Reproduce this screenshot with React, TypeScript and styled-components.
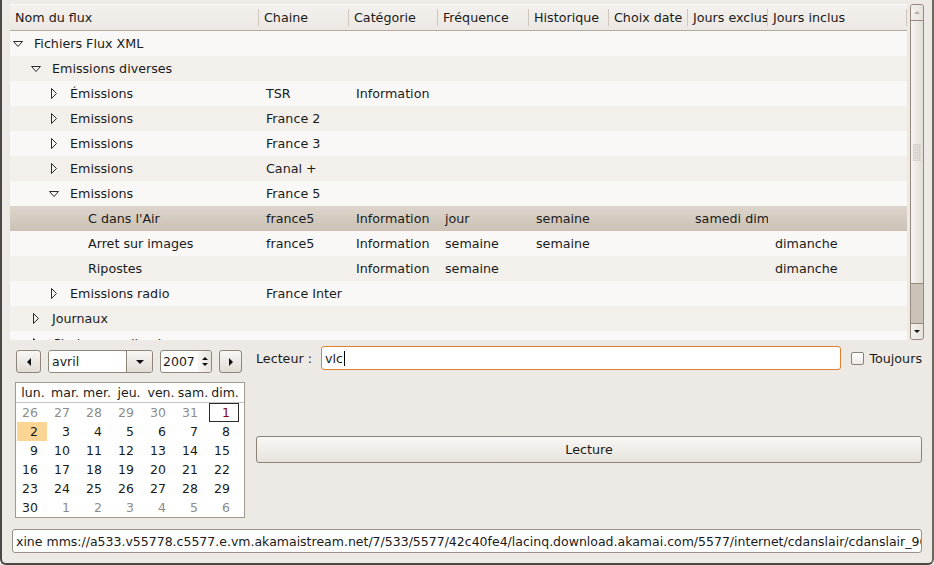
import React from 'react';
import styled, { createGlobalStyle } from 'styled-components';

const GlobalStyle = createGlobalStyle`
  html, body {
    margin: 0;
    padding: 0;
    background: #edeae6;
  }
  body {
    font-family: "DejaVu Sans", "Liberation Sans", sans-serif;
    font-size: 12.7px;
    color: #1a1a1a;
  }
`;

const Window = styled.div`
  width: 934px;
  height: 565px;
  box-sizing: border-box;
  border-left: 2px solid #4a4744;
  border-right: 2px solid #6b6661;
  border-bottom: 2px solid #4a4744;
  border-radius: 0 0 6px 6px;
  background: #edeae6;
  padding: 4px 8px 0 8px;
  display: flex;
  flex-direction: column;
`;

const TreeArea = styled.div`
  height: 336px;
  display: flex;
  gap: 3px;
`;

const TreeView = styled.div`
  flex: 1;
  background: #f9f8f7;
  overflow: hidden;
`;

const COLS = '249px 90px 89px 91px 80px 79px 80px 1fr';

const HeaderRow = styled.div`
  display: grid;
  grid-template-columns: ${COLS};
  background: linear-gradient(#f3f1ee, #ece8e3);
  border-top: 1px solid #fbfaf9;
  border-bottom: 1px solid #b4a99d;
  box-sizing: border-box;
  height: 27px;
`;

const HeaderCell = styled.div`
  position: relative;
  display: flex;
  align-items: center;
  padding-left: 5px;
  white-space: nowrap;
  overflow: hidden;
  &::after {
    content: '';
    position: absolute;
    right: 0;
    top: 4px;
    bottom: 4px;
    width: 1px;
    background: #cfc7be;
  }
`;

const Row = styled.div<{ $alt: boolean; $selected: boolean }>`
  display: grid;
  grid-template-columns: ${COLS};
  height: 25px;
  background: ${p =>
    p.$selected
      ? 'linear-gradient(#ddd5cc, #cbc1b5)'
      : p.$alt
      ? '#f3f0ec'
      : '#f9f8f7'};
`;

const Cell = styled.div`
  display: flex;
  align-items: center;
  padding-left: 7px;
  white-space: nowrap;
  overflow: hidden;
`;

const NameCell = styled.div<{ $level: number }>`
  display: flex;
  align-items: center;
  padding-left: ${p => p.$level * 18}px;
  white-space: nowrap;
  overflow: hidden;
`;

const Expander = styled.span`
  width: 24px;
  flex: none;
  display: flex;
  align-items: center;
`;

const ExpanderBox = styled.span`
  width: 15px;
  display: flex;
  justify-content: center;
  align-items: center;
`;

const Scrollbar = styled.div`
  width: 14px;
  display: flex;
  flex-direction: column;
  border: 1px solid #94897e;
  border-radius: 3px;
  overflow: hidden;
  box-sizing: border-box;
  background: #cbc2b8;
`;

const ScrollButton = styled.div`
  height: 15px;
  flex: none;
  display: flex;
  align-items: center;
  justify-content: center;
  background: linear-gradient(90deg, #f4f2ef, #e6e1db);
`;

const ScrollThumb = styled.div`
  height: 264px;
  flex: none;
  display: flex;
  align-items: center;
  justify-content: center;
  border-top: 1px solid #94897e;
  border-bottom: 1px solid #94897e;
  box-sizing: border-box;
  background: linear-gradient(90deg, #f6f4f2, #e2ddd6);
`;

const Grip = styled.div`
  width: 8px;
  height: 17px;
  background-image: linear-gradient(90deg, #d6d0c9 1px, transparent 1px),
    linear-gradient(#d6d0c9 1px, transparent 1px);
  background-size: 2px 2px;
  opacity: 0.9;
`;

const ScrollTrough = styled.div`
  flex: 1;
  border-bottom: 1px solid #94897e;
`;

const Bottom = styled.div`
  margin-top: 6px;
  height: 172px;
  display: flex;
`;

const CalendarColumn = styled.div`
  width: 230px;
  margin-left: 5px;
  padding-top: 4px;
  display: flex;
  flex-direction: column;
  font-size: 12.5px;
`;

const NavRow = styled.div`
  height: 23px;
  display: flex;
  gap: 7px;
  padding-left: 1px;
`;

const NavButton = styled.div<{ $w: number }>`
  width: ${p => p.$w}px;
  box-sizing: border-box;
  border: 1px solid #8e857b;
  border-radius: 3px;
  background: linear-gradient(#f8f6f4, #e2dcd5);
  display: flex;
  align-items: center;
  justify-content: center;
`;

const Combo = styled.div`
  width: 105px;
  box-sizing: border-box;
  border: 1px solid #8e857b;
  border-radius: 3px;
  display: flex;
  overflow: hidden;
`;

const ComboText = styled.div`
  flex: 1;
  background: #fff;
  display: flex;
  align-items: center;
  padding-left: 3px;
`;

const ComboButton = styled.div`
  width: 25px;
  border-left: 1px solid #8e857b;
  background: linear-gradient(#f8f6f4, #e2dcd5);
  display: flex;
  align-items: center;
  justify-content: center;
`;

const Spin = styled.div`
  width: 52px;
  box-sizing: border-box;
  border: 1px solid #8e857b;
  border-radius: 3px;
  background: #fff;
  display: flex;
  overflow: hidden;
`;

const SpinText = styled.div`
  flex: 1;
  display: flex;
  align-items: center;
  padding-left: 2px;
`;

const SpinArrows = styled.div`
  width: 13px;
  display: flex;
  flex-direction: column;
  align-items: center;
  justify-content: center;
  gap: 3px;
  background: linear-gradient(90deg, #f8f6f4, #e8e3dd);
`;

const Calendar = styled.div`
  margin-top: 9px;
  height: 136px;
  box-sizing: border-box;
  border: 1px solid #a39a8f;
  background: #fff;
  padding-left: 1px;
`;

const CalHeader = styled.div`
  display: grid;
  grid-template-columns: repeat(7, 32px);
  height: 19px;
  border-bottom: 1px solid #c9c2ba;
  margin-left: -1px;
  padding-left: 1px;
`;

const CalHeadCell = styled.div`
  display: flex;
  align-items: center;
  justify-content: center;
`;

const CalGrid = styled.div`
  display: grid;
  grid-template-columns: repeat(7, 32px);
  grid-auto-rows: 19px;
`;

const Day = styled.div<{ $muted: boolean; $current: boolean; $today: boolean }>`
  margin-right: 2px;
  padding-right: 8px;
  display: flex;
  align-items: center;
  justify-content: flex-end;
  box-sizing: border-box;
  color: ${p => (p.$today ? '#8b0000' : p.$muted ? '#8c8c8c' : '#1a1a1a')};
  background: ${p => (p.$current ? '#fcd494' : 'transparent')};
  border: ${p => (p.$today ? '1px solid #2a2a2a' : '1px solid transparent')};
`;

const RightColumn = styled.div`
  flex: 1;
  margin-left: 11px;
  margin-right: 2px;
  display: flex;
  flex-direction: column;
`;

const PlayerRow = styled.div`
  height: 24px;
  display: flex;
  align-items: center;
`;

const Label = styled.span`
  width: 65px;
  flex: none;
`;

const TextInput = styled.div<{ $focused?: boolean }>`
  height: 24px;
  box-sizing: border-box;
  border: 1px solid ${p => (p.$focused ? '#dc812f' : '#9a9189')};
  border-radius: 3px;
  background: #fff;
  display: flex;
  align-items: center;
  padding-left: 3px;
  white-space: nowrap;
  overflow: hidden;
`;

const PlayerInput = styled(TextInput)`
  flex: 1;
`;

const Caret = styled.span`
  display: inline-block;
  width: 1px;
  height: 15px;
  background: #000;
  margin-left: 1px;
`;

const CheckLabel = styled.label`
  display: flex;
  align-items: center;
  gap: 5px;
  margin-left: 10px;
`;

const CheckBox = styled.span`
  width: 13px;
  height: 13px;
  box-sizing: border-box;
  border: 1px solid #8a8178;
  border-radius: 2px;
  background: linear-gradient(#fff, #eeeae6);
`;

const PlayButton = styled.div`
  margin-top: 66px;
  height: 27px;
  box-sizing: border-box;
  border: 1px solid #8b8278;
  border-radius: 3px;
  background: linear-gradient(#f9f8f6, #f1eeea 45%, #e7e2dc);
  display: flex;
  align-items: center;
  justify-content: center;
`;

const CommandInput = styled(TextInput)`
  margin: 11px 2px 0 2px;
  font-size: 12.5px;
`;

type TreeRow = {
  level: number;
  open?: boolean;
  leaf?: boolean;
  selected?: boolean;
  cells: string[];
};

const headers = ['Nom du flux', 'Chaine', 'Catégorie', 'Fréquence', 'Historique', 'Choix date', 'Jours exclus', 'Jours inclus'];

const rows: TreeRow[] = [
  { level: 0, open: true, cells: ['Fichiers Flux XML'] },
  { level: 1, open: true, cells: ['Emissions diverses'] },
  { level: 2, cells: ['Émissions', 'TSR', 'Information'] },
  { level: 2, cells: ['Emissions', 'France 2'] },
  { level: 2, cells: ['Emissions', 'France 3'] },
  { level: 2, cells: ['Emissions', 'Canal +'] },
  { level: 2, open: true, cells: ['Emissions', 'France 5'] },
  { level: 3, leaf: true, selected: true, cells: ["C dans l'Air", 'france5', 'Information', 'jour', 'semaine', '', 'samedi dimanche', ''] },
  { level: 3, leaf: true, cells: ['Arret sur images', 'france5', 'Information', 'semaine', 'semaine', '', '', 'dimanche'] },
  { level: 3, leaf: true, cells: ['Ripostes', '', 'Information', 'semaine', '', '', '', 'dimanche'] },
  { level: 2, cells: ['Emissions radio', 'France Inter'] },
  { level: 1, cells: ['Journaux'] },
  { level: 1, cells: ['Chaines en direct'] },
];

const dayNames = ['lun.', 'mar.', 'mer.', 'jeu.', 'ven.', 'sam.', 'dim.'];

// six weeks shown for avril 2007, starting lundi 26 mars
const days: { n: number; muted: boolean }[] = [];
for (let i = 26; i <= 31; i++) days.push({ n: i, muted: true });
for (let i = 1; i <= 30; i++) days.push({ n: i, muted: false });
for (let i = 1; i <= 6; i++) days.push({ n: i, muted: true });

const OpenArrow = () => (
  <svg width="10" height="6" viewBox="0 0 10 6">
    <path d="M0.5 0.5 H9.5 L5 5.5 Z" fill="none" stroke="#2b2b2b" strokeWidth="1" />
  </svg>
);

const ClosedArrow = () => (
  <svg width="6" height="11" viewBox="0 0 6 11">
    <path d="M0.5 0.5 L5.5 5.5 L0.5 10.5 Z" fill="none" stroke="#2b2b2b" strokeWidth="1" />
  </svg>
);

const Tri = ({ dir, color = '#111', size = 4 }: { dir: 'up' | 'down' | 'left' | 'right'; color?: string; size?: number }) => {
  const s = size;
  const d =
    dir === 'up'
      ? `M0 ${s} L${s} 0 L${2 * s} ${s} Z`
      : dir === 'down'
      ? `M0 0 L${2 * s} 0 L${s} ${s} Z`
      : dir === 'left'
      ? `M${s} 0 L${s} ${2 * s} L0 ${s} Z`
      : `M0 0 L${s} ${s} L0 ${2 * s} Z`;
  const vertical = dir === 'up' || dir === 'down';
  return (
    <svg width={vertical ? 2 * s : s} height={vertical ? s : 2 * s}>
      <path d={d} fill={color} />
    </svg>
  );
};

const App: React.FC = () => {
  return (
    <>
      <GlobalStyle />
      <Window>
        <TreeArea>
          <TreeView>
            <HeaderRow>
              {headers.map(h => (
                <HeaderCell key={h}>{h}</HeaderCell>
              ))}
            </HeaderRow>
            {rows.map((r, i) => (
              <Row key={i} $alt={i % 2 === 1} $selected={!!r.selected}>
                <NameCell $level={r.level}>
                  <Expander>
                    <ExpanderBox>{r.leaf ? null : r.open ? <OpenArrow /> : <ClosedArrow />}</ExpanderBox>
                  </Expander>
                  {r.cells[0]}
                </NameCell>
                {headers.slice(1).map((_, c) => (
                  <Cell key={c}>{r.cells[c + 1] || ''}</Cell>
                ))}
              </Row>
            ))}
          </TreeView>
          <Scrollbar>
            <ScrollButton>
              <Tri dir="up" color="#b8b0a7" size={3} />
            </ScrollButton>
            <ScrollThumb>
              <Grip />
            </ScrollThumb>
            <ScrollTrough />
            <ScrollButton>
              <Tri dir="down" color="#111" size={3} />
            </ScrollButton>
          </Scrollbar>
        </TreeArea>

        <Bottom>
          <CalendarColumn>
            <NavRow>
              <NavButton $w={25}>
                <Tri dir="left" size={4} />
              </NavButton>
              <Combo>
                <ComboText>avril</ComboText>
                <ComboButton>
                  <Tri dir="down" size={4} />
                </ComboButton>
              </Combo>
              <Spin>
                <SpinText>2007</SpinText>
                <SpinArrows>
                  <Tri dir="up" size={3} />
                  <Tri dir="down" size={3} />
                </SpinArrows>
              </Spin>
              <NavButton $w={23}>
                <Tri dir="right" size={4} />
              </NavButton>
            </NavRow>
            <Calendar>
              <CalHeader>
                {dayNames.map(d => (
                  <CalHeadCell key={d}>{d}</CalHeadCell>
                ))}
              </CalHeader>
              <CalGrid>
                {days.map((d, i) => (
                  <Day key={i} $muted={d.muted} $current={i === 7} $today={i === 6}>
                    {d.n}
                  </Day>
                ))}
              </CalGrid>
            </Calendar>
          </CalendarColumn>

          <RightColumn>
            <PlayerRow>
              <Label>Lecteur :</Label>
              <PlayerInput $focused>
                vlc
                <Caret />
              </PlayerInput>
              <CheckLabel>
                <CheckBox />
                Toujours
              </CheckLabel>
            </PlayerRow>
            <PlayButton>Lecture</PlayButton>
          </RightColumn>
        </Bottom>

        <CommandInput>
          xine mms://a533.v55778.c5577.e.vm.akamaistream.net/7/533/5577/42c40fe4/lacinq.download.akamai.com/5577/internet/cdanslair/cdanslair_90402.wmv
        </CommandInput>
      </Window>
    </>
  );
};

export default App;
